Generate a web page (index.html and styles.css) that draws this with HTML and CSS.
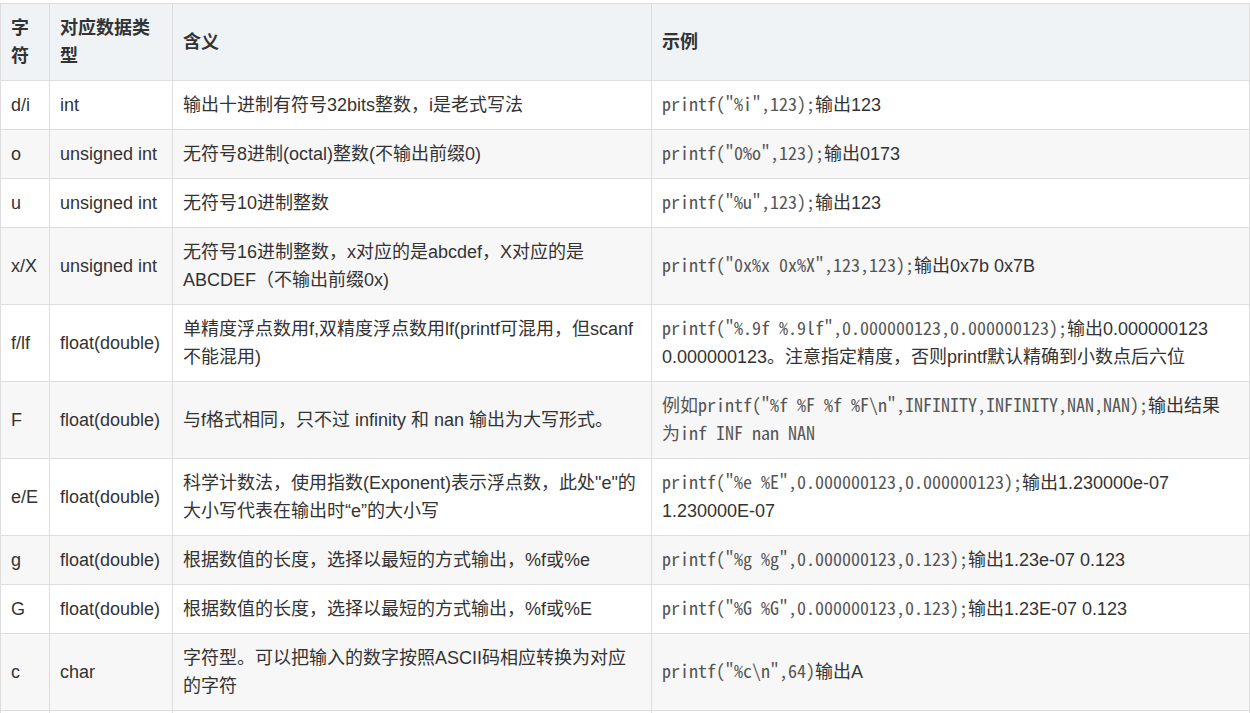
FILE: index.html
```html
<!DOCTYPE html>
<html lang="zh-CN">
<head>
<meta charset="utf-8">
<title>printf 格式字符</title>
<link rel="stylesheet" href="styles.css">
</head>
<body>
<table class="fmt">
  <colgroup>
    <col class="c1"><col class="c2"><col class="c3"><col class="c4">
  </colgroup>
  <thead>
    <tr><th>字符</th><th>对应数据类型</th><th>含义</th><th>示例</th></tr>
  </thead>
  <tbody>
    <tr><td>d/i</td><td>int</td><td>输出十进制有符号32bits整数，i是老式写法</td><td><code>printf("%i",123);</code>输出123</td></tr>
    <tr><td>o</td><td>unsigned int</td><td>无符号8进制(octal)整数(不输出前缀0)</td><td><code>printf("0%o",123);</code>输出0173</td></tr>
    <tr><td>u</td><td>unsigned int</td><td>无符号10进制整数</td><td><code>printf("%u",123);</code>输出123</td></tr>
    <tr><td>x/X</td><td>unsigned int</td><td>无符号16进制整数，x对应的是abcdef，X对应的是ABCDEF（不输出前缀0x)</td><td><code>printf("0x%x 0x%X",123,123);</code>输出0x7b 0x7B</td></tr>
    <tr><td>f/lf</td><td>float(double)</td><td>单精度浮点数用f,双精度浮点数用lf(printf可混用，但scanf不能混用)</td><td><code>printf("%.9f %.9lf",0.000000123,0.000000123);</code>输出0.000000123 0.000000123。注意指定精度，否则printf默认精确到小数点后六位</td></tr>
    <tr><td>F</td><td>float(double)</td><td>与f格式相同，只不过 infinity 和 nan 输出为大写形式。</td><td><code>例如printf("%f %F %f %F\n",INFINITY,INFINITY,NAN,NAN);</code>输出结果<br><code>为inf INF nan NAN</code></td></tr>
    <tr><td>e/E</td><td>float(double)</td><td>科学计数法，使用指数(Exponent)表示浮点数，此处"e"的大小写代表在输出时“e”的大小写</td><td><code>printf("%e %E",0.000000123,0.000000123);</code>输出1.230000e-07 1.230000E-07</td></tr>
    <tr><td>g</td><td>float(double)</td><td>根据数值的长度，选择以最短的方式输出，%f或%e</td><td><code>printf("%g %g",0.000000123,0.123);</code>输出1.23e-07 0.123</td></tr>
    <tr><td>G</td><td>float(double)</td><td>根据数值的长度，选择以最短的方式输出，%f或%E</td><td><code>printf("%G %G",0.000000123,0.123);</code>输出1.23E-07 0.123</td></tr>
    <tr><td>c</td><td>char</td><td>字符型。可以把输入的数字按照ASCII码相应转换为对应的字符</td><td><code>printf("%c\n",64)</code>输出A</td></tr>
    <tr><td>s</td><td>char *</td><td>字符串。输出字符串中的字符直至字符串中的空字符</td><td><code>printf("%s","hello");</code>输出hello</td></tr>
  </tbody>
</table>
</body>
</html>
```

FILE: styles.css
```css
html, body {
  margin: 0;
  padding: 0;
  background: #ffffff;
}
body {
  padding-top: 3px;
  font-family: "Liberation Sans", "Noto Sans CJK SC", sans-serif;
  font-size: 18px;
  color: #333333;
}
.fmt {
  border-collapse: collapse;
  table-layout: fixed;
  width: 1249px;
}
.c1 { width: 49px; }
.c2 { width: 123px; }
.c3 { width: 479px; }
.c4 { width: 598px; }
.fmt th,
.fmt td {
  border: 1px solid #dddddd;
  padding: 10px 10px;
  line-height: 28px;
  text-align: left;
  vertical-align: middle;
}
.fmt th {
  background: #eff3f5;
  font-weight: bold;
}
.fmt tbody tr:nth-child(even) td {
  background: #f7f7f7;
}
.fmt code {
  font-family: "Noto Sans Mono CJK SC", "Liberation Mono", monospace;
  font-size: 18px;
  font-weight: 300;
  line-height: 1;
  color: #555555;
}
```
